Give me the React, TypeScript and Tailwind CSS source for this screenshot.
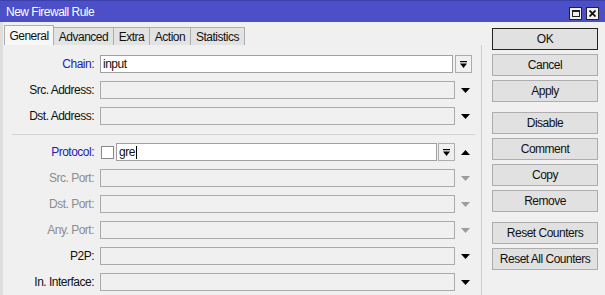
import React from "react";

const Down = ({ gray }: { gray?: boolean }) => (
  <svg width="9" height="5" viewBox="0 0 9 5">
    <polygon points="0,0 9,0 4.5,5" fill={gray ? "#9c9c9c" : "#000"} />
  </svg>
);

const Up = () => (
  <svg width="9" height="5" viewBox="0 0 9 5">
    <polygon points="0,5 9,5 4.5,0" fill="#000" />
  </svg>
);

const DropBtn = () => (
  <div className="shrink-0 w-[17px] h-[18px] border border-[#adadad] bg-[#f0f0f0] flex items-center justify-center">
    <svg width="7" height="7" viewBox="0 0 7 7">
      <rect x="0" y="0" width="7" height="1.2" fill="#000" />
      <polygon points="0,2.5 7,2.5 3.5,7" fill="#000" />
    </svg>
  </div>
);

type RowProps = {
  label: string;
  color?: string;
  children?: React.ReactNode;
  arrow?: React.ReactNode;
};

const Row = ({ label, color = "text-[#111]", children, arrow }: RowProps) => (
  <div className="flex items-center h-[18px]">
    <div className={`shrink-0 w-[92px] text-right pr-[1px] ${color}`}>{label}</div>
    <div className="shrink-0 ml-[5px] w-[355px] h-[18px] flex items-center">{children}</div>
    <div className="shrink-0 w-[20px] flex items-center justify-center">{arrow}</div>
  </div>
);

const Empty = () => <div className="w-full h-[18px] border border-[#aaaaaa] bg-[#f0f0f0]" />;

const Btn = ({ label, def }: { label: string; def?: boolean }) => (
  <div
    className={`w-[106px] h-[22px] flex items-center justify-center bg-[#e1e1e1] border ${
      def ? "border-[#222]" : "border-[#adadad]"
    } text-[#111]`}
  >
    {label}
  </div>
);

export default function App() {
  const tabs: [string, number][] = [
    ["Advanced", 60],
    ["Extra", 36],
    ["Action", 41],
    ["Statistics", 54],
  ];
  return (
    <div className="w-[605px] h-[295px] bg-[#f0f0f0] flex flex-col overflow-hidden text-[12px] tracking-[-0.5px] leading-none font-[family-name:'Liberation_Sans',Arial,sans-serif]">
      {/* Title bar */}
      <div className="h-[22px] bg-[#4b4fc8] border-t border-[#3d40a8] flex items-center pl-[6px] pr-[6px] text-white">
        <span>New Firewall Rule</span>
        <div className="ml-auto flex gap-[4px] mt-[4px]">
          <div className="w-[13px] h-[13px] bg-[#f0f0f0] border border-[#222] flex items-center justify-center">
            <div className="w-[8px] h-[7px] border border-[#222] border-t-2" />
          </div>
          <div className="w-[13px] h-[13px] bg-[#f0f0f0] border border-[#222] flex items-center justify-center">
            <svg width="7" height="7" viewBox="0 0 7 7">
              <path d="M0.5 0.5 L6.5 6.5 M6.5 0.5 L0.5 6.5" stroke="#111" strokeWidth="1.8" />
            </svg>
          </div>
        </div>
      </div>

      <div className="flex flex-1">
        {/* Left panel */}
        <div className="w-[482px] shrink-0 flex flex-col border-l-[3px] border-[#dedede]">
          <div className="h-[23px] flex items-end pl-[1px]">
            <div className="w-[50px] h-[20px] bg-[#f7f7f7] border border-b-0 border-[#adadad] flex items-center justify-center text-[#111]">
              General
            </div>
            {tabs.map(([t, w]) => (
              <div
                key={t}
                style={{ width: w }}
                className="h-[18px] bg-[#e3e3e3] border border-l-0 border-b-0 border-[#adadad] flex items-center justify-center text-[#111]"
              >
                {t}
              </div>
            ))}
          </div>

          <div className="flex-1 border-r border-[#cfcfcf] pt-[10px] flex flex-col gap-[8px]">
            <Row label="Chain:" color="text-[#1f22b0]" arrow={null}>
              <div className="shrink-0 w-[353px] h-[18px] border border-[#a0a0a0] bg-white flex items-center pl-[2px] text-[#111]">
                input
              </div>
              <div className="shrink-0 ml-[2px]">
                <DropBtn />
              </div>
            </Row>
            <Row label="Src. Address:" arrow={<Down />}>
              <Empty />
            </Row>
            <Row label="Dst. Address:" arrow={<Down />}>
              <Empty />
            </Row>
            <div className="h-[2px] flex items-end">
              <div className="ml-[9px] w-[463px] h-[1px] bg-[#d4d4d4]" />
            </div>
            <Row label="Protocol:" color="text-[#1f22b0]" arrow={<Up />}>
              <div className="shrink-0 ml-[1px] w-[13px] h-[13px] border border-[#8a8a8a] bg-white" />
              <div className="shrink-0 ml-[2px] w-[321px] h-[18px] border border-[#a0a0a0] bg-white flex items-center pl-[2px] text-[#111]">
                gre
                <span className="inline-block w-[1px] h-[13px] bg-black ml-[1px]" />
              </div>
              <div className="shrink-0 ml-[1px]">
                <DropBtn />
              </div>
            </Row>
            <Row label="Src. Port:" color="text-[#8c8c8c]" arrow={<Down gray />}>
              <Empty />
            </Row>
            <Row label="Dst. Port:" color="text-[#8c8c8c]" arrow={<Down gray />}>
              <Empty />
            </Row>
            <Row label="Any. Port:" color="text-[#8c8c8c]" arrow={<Down gray />}>
              <Empty />
            </Row>
            <Row label="P2P:" arrow={<Down />}>
              <Empty />
            </Row>
            <Row label="In. Interface:" arrow={<Down />}>
              <Empty />
            </Row>
          </div>
        </div>

        {/* Right buttons */}
        <div className="pl-[10px] pt-[6px] flex flex-col gap-[10px]">
          <div className="flex flex-col gap-[4px]">
            <Btn label="OK" def />
            <Btn label="Cancel" />
            <Btn label="Apply" />
          </div>
          <div className="flex flex-col gap-[4px]">
            <Btn label="Disable" />
            <Btn label="Comment" />
            <Btn label="Copy" />
            <Btn label="Remove" />
          </div>
          <div className="flex flex-col gap-[4px]">
            <Btn label="Reset Counters" />
            <Btn label="Reset All Counters" />
          </div>
        </div>
      </div>
    </div>
  );
}
